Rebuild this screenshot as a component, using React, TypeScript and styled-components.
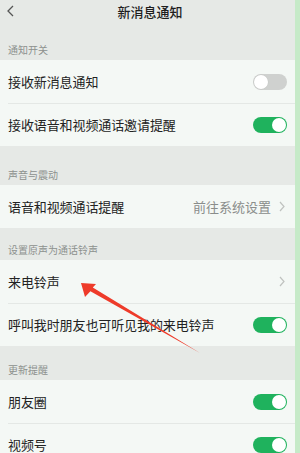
import React from "react";
import styled, { createGlobalStyle } from "styled-components";

const GlobalStyle = createGlobalStyle`
  html, body {
    margin: 0;
    padding: 0;
    background: #e6e9e6;
  }
  body {
    font-family: "Noto Sans CJK SC", "Noto Sans", sans-serif;
  }
`;

type Item =
  | { label: string; kind: "switch"; on: boolean }
  | { label: string; kind: "link"; value?: string };

interface Section {
  title: string;
  gap: number;
  items: Item[];
}

const SECTIONS: Section[] = [
  {
    title: "通知开关",
    gap: 20,
    items: [
      { label: "接收新消息通知", kind: "switch", on: false },
      { label: "接收语音和视频通话邀请提醒", kind: "switch", on: true },
    ],
  },
  {
    title: "声音与震动",
    gap: 22,
    items: [{ label: "语音和视频通话提醒", kind: "link", value: "前往系统设置" }],
  },
  {
    title: "设置原声为通话铃声",
    gap: 15,
    items: [
      { label: "来电铃声", kind: "link" },
      { label: "呼叫我时朋友也可听见我的来电铃声", kind: "switch", on: true },
    ],
  },
  {
    title: "更新提醒",
    gap: 17,
    items: [
      { label: "朋友圈", kind: "switch", on: true },
      { label: "视频号", kind: "switch", on: true },
    ],
  },
];

const App = () => {
  return (
    <>
      <GlobalStyle />
      <Screen>
        <Page>
          <Header>
            <BackButton>
              <svg width="7" height="12" viewBox="0 0 7 12" fill="none">
                <path d="M6 1 L1 6 L6 11" stroke="#555" strokeWidth="1.3" />
              </svg>
            </BackButton>
            <Title>新消息通知</Title>
          </Header>
          {SECTIONS.map(section => (
            <div key={section.title}>
              <SectionLabel $gap={section.gap}>{section.title}</SectionLabel>
              <Group>
                {section.items.map(item => (
                  <Row key={item.label}>
                    <RowLabel>{item.label}</RowLabel>
                    {item.kind === "switch" ? (
                      <Switch $on={item.on}>
                        <Knob $on={item.on} />
                      </Switch>
                    ) : (
                      <RowRight>
                        {item.value && <RowValue>{item.value}</RowValue>}
                        <svg width="6" height="11" viewBox="0 0 6 11" fill="none">
                          <path d="M1 1 L5 5.5 L1 10" stroke="#bfc2bf" strokeWidth="1.2" />
                        </svg>
                      </RowRight>
                    )}
                  </Row>
                ))}
              </Group>
            </div>
          ))}
          {/* red annotation arrow pointing at 来电铃声 */}
          <Arrow width="130" height="90" viewBox="0 0 130 90">
            <path
              d="M1 13 L16 14 L12.8 17.6 L120 83 L10.4 21.2 L5 27 Z"
              fill="#ee3b2a"
            />
          </Arrow>
        </Page>
        <EdgeStrip />
      </Screen>
    </>
  );
};

const Screen = styled.div`
  display: flex;
  width: 300px;
  height: 453px;
  overflow: hidden;
`;

const Page = styled.div`
  position: relative;
  width: 295px;
  background: #e6e9e6;
`;

const EdgeStrip = styled.div`
  width: 5px;
  background: #c6eac8;
`;

const Header = styled.div`
  position: relative;
  height: 23px;
  display: flex;
  align-items: center;
  justify-content: center;
`;

const BackButton = styled.div`
  position: absolute;
  left: 7px;
  top: 5px;
  display: flex;
`;

const Title = styled.div`
  font-size: 13px;
  font-weight: 500;
  color: #1e1e1e;
  margin-left: 5px;
`;

const SectionLabel = styled.div<{ $gap: number }>`
  padding: ${p => p.$gap}px 8px 3px;
  font-size: 10px;
  line-height: 14px;
  color: #8d918e;
`;

const Group = styled.div`
  background: #f4f8f5;
`;

const Row = styled.div`
  position: relative;
  height: 43px;
  display: flex;
  align-items: center;
  justify-content: space-between;
  padding: 0 8px;
  & + & {
    &::before {
      content: "";
      position: absolute;
      left: 8px;
      right: 0;
      top: 0;
      height: 1px;
      background: #e4e8e5;
    }
  }
`;

const RowLabel = styled.div`
  font-size: 13px;
  color: #222;
  letter-spacing: -0.1px;
`;

const RowRight = styled.div`
  display: flex;
  align-items: center;
  gap: 8px;
  margin-right: 2px;
`;

const RowValue = styled.div`
  font-size: 13px;
  color: #8a8d8b;
`;

const Switch = styled.div<{ $on: boolean }>`
  width: 34px;
  height: 16px;
  border-radius: 8px;
  background: ${p => (p.$on ? "#1fb25d" : "#cfd1cf")};
  display: flex;
  align-items: center;
  justify-content: ${p => (p.$on ? "flex-end" : "flex-start")};
  padding: 0 1px;
  box-sizing: border-box;
`;

const Knob = styled.div<{ $on: boolean }>`
  width: 14px;
  height: 14px;
  border-radius: 50%;
  background: #fff;
  box-shadow: ${p => (p.$on ? "none" : "0 0 0 0.5px #c4c6c4")};
`;

const Arrow = styled.svg`
  position: absolute;
  left: 80px;
  top: 270px;
`;

export default App;
